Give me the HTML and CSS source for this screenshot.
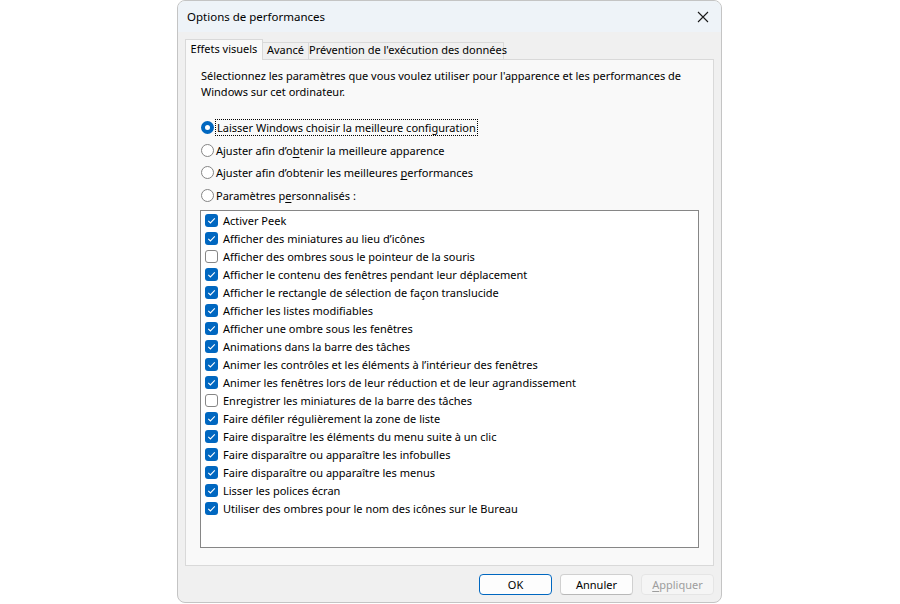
FILE: index.html
```html
<!DOCTYPE html>
<html lang="fr">
<head>
<meta charset="utf-8">
<title>Options de performances</title>
<link rel="stylesheet" href="styles.css">
</head>
<body>
<div class="window">
  <div class="titlebar">
    <span class="title">Options de performances</span>
    <span class="close">
      <svg width="12" height="12" viewBox="0 0 12 12"><path d="M1 1L11 11M11 1L1 11" stroke="#1a1a1a" stroke-width="1.1" fill="none"/></svg>
    </span>
  </div>
  <div class="body">
    <div class="tabs">
      <div class="tab active t1">Effets visuels</div>
      <div class="tab t2">Avancé</div>
      <div class="tab t3">Prévention de l'exécution des données</div>
    </div>
    <div class="panel">
      <p class="desc">Sélectionnez les paramètres que vous voulez utiliser pour l'apparence et les performances de Windows sur cet ordinateur.</p>
      <div class="radios">
        <div class="radio-row"><span class="radio on"></span><span class="focus">Laisser Windows choisir la meilleure configuration</span></div>
        <div class="radio-row"><span class="radio"></span><span>Ajuster afin d’o<u>b</u>tenir la meilleure apparence</span></div>
        <div class="radio-row"><span class="radio"></span><span>Ajuster afin d’obtenir les meilleures <u>p</u>erformances</span></div>
        <div class="radio-row"><span class="radio"></span><span>Paramètres p<u>e</u>rsonnalisés :</span></div>
      </div>
      <div class="list">
        <div class="item"><span class="cb on"></span>Activer Peek</div>
        <div class="item"><span class="cb on"></span>Afficher des miniatures au lieu d’icônes</div>
        <div class="item"><span class="cb"></span>Afficher des ombres sous le pointeur de la souris</div>
        <div class="item"><span class="cb on"></span>Afficher le contenu des fenêtres pendant leur déplacement</div>
        <div class="item"><span class="cb on"></span>Afficher le rectangle de sélection de façon translucide</div>
        <div class="item"><span class="cb on"></span>Afficher les listes modifiables</div>
        <div class="item"><span class="cb on"></span>Afficher une ombre sous les fenêtres</div>
        <div class="item"><span class="cb on"></span>Animations dans la barre des tâches</div>
        <div class="item"><span class="cb on"></span>Animer les contrôles et les éléments à l’intérieur des fenêtres</div>
        <div class="item"><span class="cb on"></span>Animer les fenêtres lors de leur réduction et de leur agrandissement</div>
        <div class="item"><span class="cb"></span>Enregistrer les miniatures de la barre des tâches</div>
        <div class="item"><span class="cb on"></span>Faire défiler régulièrement la zone de liste</div>
        <div class="item"><span class="cb on"></span>Faire disparaître les éléments du menu suite à un clic</div>
        <div class="item"><span class="cb on"></span>Faire disparaître ou apparaître les infobulles</div>
        <div class="item"><span class="cb on"></span>Faire disparaître ou apparaître les menus</div>
        <div class="item"><span class="cb on"></span>Lisser les polices écran</div>
        <div class="item"><span class="cb on"></span>Utiliser des ombres pour le nom des icônes sur le Bureau</div>
      </div>
    </div>
    <div class="buttons">
      <button class="btn default">OK</button>
      <button class="btn">Annuler</button>
      <button class="btn disabled"><u>A</u>ppliquer</button>
    </div>
  </div>
</div>
</body>
</html>
```
FILE: styles.css
```css
* { box-sizing: border-box; }
html, body { margin: 0; padding: 0; background: #ffffff; }
body {
  font-family: "Noto Sans", "Liberation Sans", sans-serif;
  font-size: 11px;
  color: #000;
}
.window {
  margin-left: 177px;
  width: 545px;
  height: 603px;
  border: 1px solid #c4c4c4;
  border-radius: 8px;
  background: #f0f0f0;
  overflow: hidden;
  display: flex;
  flex-direction: column;
}
.titlebar {
  height: 31px;
  flex: none;
  background: #eef3f8;
  display: flex;
  align-items: center;
  justify-content: space-between;
  padding: 0 9px 0 9px;
}
.title { font-size: 11.5px; line-height: 16px; }
.close { width: 12px; height: 12px; margin-right: 3px; display: flex; }
.body {
  flex: 1;
  padding: 7px 7px 0 7px;
  display: flex;
  flex-direction: column;
}
.tabs {
  display: flex;
  align-items: flex-end;
  height: 20px;
  position: relative;
  z-index: 1;
}
.tab {
  height: 17px;
  line-height: 14px;
  border: 1px solid #d9d9d9;
  border-bottom: none;
  border-left: none;
  background: #f0f0f0;
  white-space: nowrap;
  text-align: center;
}
.t1 { width: 78px; }
.t2 { width: 46px; }
.t3 { width: 195px; }
.tab.active {
  height: 21px;
  margin-bottom: -1px;
  border-left: 1px solid #d9d9d9;
  background: #f9f9f9;
  line-height: 17px;
}
.panel {
  height: 507px;
  border: 1px solid #d9d9d9;
  background: #f9f9f9;
  padding: 8px 0 0 15px;
  display: flex;
  flex-direction: column;
}
.desc {
  margin: 0;
  line-height: 16px;
  width: 500px;
}
.radios {
  margin-top: 16px;
  display: flex;
  flex-direction: column;
}
.radio-row {
  height: 22.7px;
  display: flex;
  align-items: center;
  white-space: nowrap;
}
.radio {
  width: 13px;
  height: 13px;
  border: 1px solid #858585;
  border-radius: 50%;
  background: #fff;
  margin-right: 2px;
  flex: none;
}
.radio.on {
  border: 4px solid #0067c0;
  background: #fff;
}
.focus {
  outline: 1px dotted #000;
  outline-offset: 0;
  padding: 0 1px;
  line-height: 15px;
}
u { text-decoration-thickness: 1px; text-underline-offset: 2px; }
.list {
  margin-top: 3px;
  margin-left: -1px;
  width: 499px;
  height: 338px;
  border: 1px solid #868686;
  background: #fff;
  padding: 1px 0 0 4px;
}
.item {
  height: 18px;
  display: flex;
  align-items: center;
  white-space: nowrap;
}
.cb {
  width: 13px;
  height: 13px;
  border-radius: 3px;
  border: 1px solid #868686;
  background: #fff;
  margin-right: 5px;
  flex: none;
}
.cb.on {
  border: none;
  background: #0067c0 url("data:image/svg+xml;utf8,<svg xmlns='http://www.w3.org/2000/svg' width='13' height='13' viewBox='0 0 13 13'><path d='M3.3 6.8L5.4 8.9L9.8 4.4' stroke='white' stroke-width='1.1' fill='none'/></svg>") no-repeat center;
}
.buttons {
  display: flex;
  justify-content: flex-end;
  gap: 8px;
  padding-top: 8px;
}
.btn {
  width: 73px;
  height: 21px;
  font-family: inherit;
  font-size: 11px;
  border: 1px solid #d0d0d0;
  border-bottom-color: #b8b8b8;
  border-radius: 4px;
  background: #fdfdfd;
  color: #000;
  padding: 0;
  line-height: 17px;
}
.btn.default { border: 1px solid #0067c0; }
.btn.disabled { color: #9d9d9d; background: #f5f5f5; border-color: #e5e5e5; }
```
